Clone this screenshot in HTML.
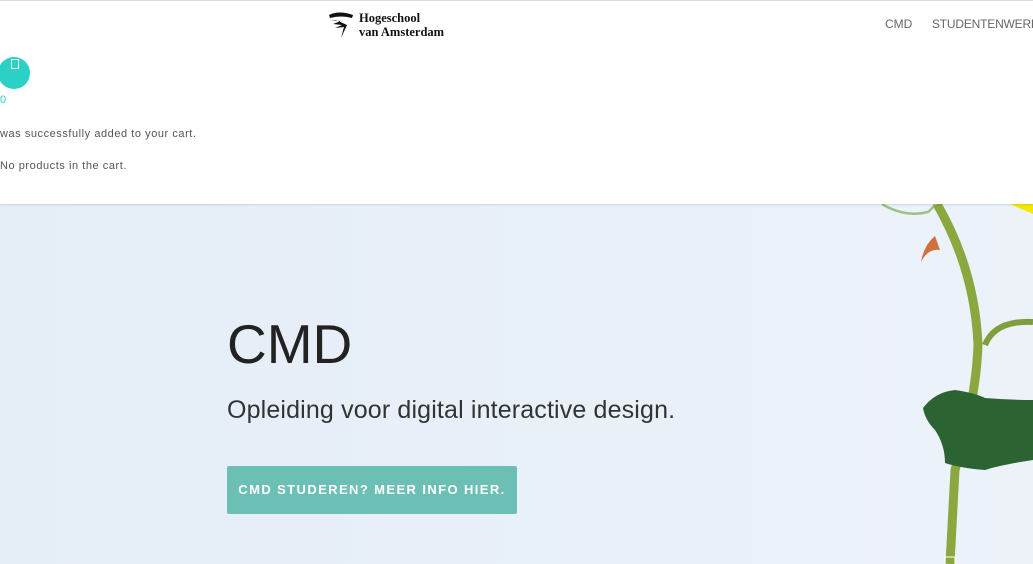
<!DOCTYPE html>
<html><head><style>
body{margin:0;width:1033px;height:564px;overflow:hidden;font-family:"Liberation Sans",sans-serif;background:#fff;position:relative}
.top{position:absolute;left:0;top:0;width:1033px;height:204px;background:#fff;border-top:1px solid #ddd;box-sizing:border-box;box-shadow:0 1px 2px rgba(0,0,0,.12);z-index:2}
.hero{position:absolute;left:0;top:204px;width:1033px;height:360px;background:linear-gradient(90deg,#e5edf7,#e9f0f8 60%,#edf2f9)}
.nav{position:absolute;top:16px;font-size:12px;color:#666;white-space:nowrap}
.t{position:absolute;font-size:11px;color:#555;letter-spacing:.55px;white-space:nowrap}
</style></head><body>
<div class="top">
 <svg style="position:absolute;left:327px;top:10px" width="28" height="28" viewBox="0 0 28 28"><path d="M2 4 Q12 -1 26 4 L25 7 Q14 4 3 7Z" fill="#111"/><path d="M3 9 L14 10 L6 13 L15 14 L8 17 L17 16 L14 27 L20 14 L9 9Z" fill="#111"/></svg>
 <div style="position:absolute;left:359px;top:10px;font-family:'Liberation Serif',serif;font-weight:bold;font-size:12.5px;line-height:14px;color:#111">Hogeschool<br>van Amsterdam</div>
 <div class="nav" style="left:885px">CMD</div>
 <div class="nav" style="left:932px;letter-spacing:-.2px">STUDENTENWERK</div>
 <div style="position:absolute;left:-2px;top:56px;width:32px;height:32px;border-radius:50%;background:#2bd1c5"></div>
 <div style="position:absolute;left:11px;top:58px;width:6px;height:8px;border:1px solid #fff"></div>
 <div style="position:absolute;left:0;top:93px;font-size:11px;color:#2bd1c5">0</div>
 <div class="t" style="left:0;top:127px">was successfully added to your cart.</div>
 <div class="t" style="left:0;top:159px">No products in the cart.</div>
</div>
<div class="hero"></div>
<svg style="position:absolute;left:0;top:0" width="1033" height="564">
 <path d="M1010 204 L1033 204 L1033 214Z" fill="#f3e800"/>
 <path d="M882 204 Q905 218 928 212 Q933 208 935 204" stroke="#9cc08a" stroke-width="2.5" fill="none"/>
 <path d="M935 236 Q924 245 921 262 Q928 248 940 250Z" fill="#d2703a"/>
 <path d="M937 204 Q975 270 978 345 Q976 400 955 470 L950 564" stroke="#8aa83f" stroke-width="9" fill="none"/>
 <path d="M985 345 Q995 320 1033 322" stroke="#7f9e3e" stroke-width="6" fill="none"/>
 <path d="M923 408 Q935 392 955 390 Q975 393 985 398 Q1010 400 1033 400 L1033 460 Q1000 465 985 470 Q960 468 945 463 Q945 445 935 430 Q925 420 923 408Z" fill="#2b6432"/>
 <rect x="945" y="557" width="10" height="8" fill="none" stroke="#fff"/>
</svg>
<div style="position:absolute;left:227px;top:312px;font-size:55px;color:#222">CMD</div>
<div style="position:absolute;left:227px;top:396px;font-size:25px;color:#333;letter-spacing:.15px;white-space:nowrap">Opleiding voor digital interactive design.</div>
<div style="position:absolute;left:227px;top:466px;width:290px;height:48px;background:#6cbfb5;border-radius:2px;color:#fff;font-weight:bold;font-size:13px;letter-spacing:1.4px;line-height:48px;text-align:center">CMD STUDEREN? MEER INFO HIER.</div>
</body></html>
